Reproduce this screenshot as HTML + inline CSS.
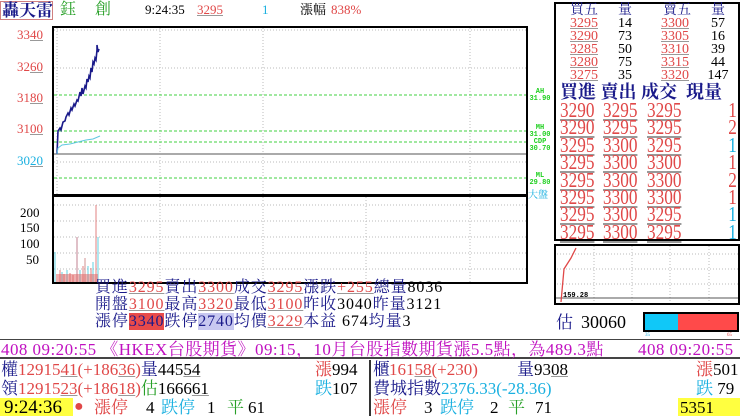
<!DOCTYPE html>
<html><head><meta charset="utf-8"><style>
*{margin:0;padding:0;box-sizing:border-box}
body{width:740px;height:416px;background:#fff;position:relative;overflow:hidden;font-family:"Liberation Serif","Noto Serif CJK SC","Noto Sans CJK TC",serif;color:#000}
.a{position:absolute;white-space:nowrap;line-height:1}
.r{color:#e04848}.b{color:#1a1a8a}.c{color:#1ab0e0}.g{color:#28a028}.m{color:#c010c0}
u{text-decoration:underline;text-decoration-color:#999}
.sg{font-family:"Liberation Mono",monospace;font-size:7px;color:#20d020;text-align:center;line-height:7px;font-weight:bold}
.ob{position:absolute;font-size:14px;line-height:13px;text-align:center;width:46px}
.big{position:absolute;font-size:21px;line-height:17.4px;letter-spacing:0;transform:scaleX(.82);transform-origin:0 0}
.bot{font-size:17px}
</style></head><body>
<!-- title -->
<div class="a b" style="left:0;top:1px;width:53px;height:19px;border:1px solid #d08080;font-size:17px;font-weight:bold;padding-left:1px">轟天雷</div>
<div class="a g" style="left:60px;top:2px;font-size:16px">鈺</div>
<div class="a g" style="left:95px;top:2px;font-size:16px">創</div>
<div class="a" style="left:145px;top:3px;font-size:13px">9:24:35</div>
<div class="a r" style="left:197px;top:3px;font-size:13px"><u>3295</u></div>
<div class="a c" style="left:262px;top:3px;font-size:13px">1</div>
<div class="a" style="left:300px;top:3px;font-size:13px">漲幅</div>
<div class="a r" style="left:331px;top:3px;font-size:13px">838%</div>
<!-- y labels -->
<div class="a r" style="left:17px;top:28px;font-size:13px">33<u>40</u></div>
<div class="a r" style="left:17px;top:60px;font-size:13px">32<u>60</u></div>
<div class="a r" style="left:17px;top:91px;font-size:13px">31<u>80</u></div>
<div class="a r" style="left:17px;top:122px;font-size:13px">31<u>00</u></div>
<div class="a c" style="left:17px;top:154px;font-size:13px">30<u>20</u></div>
<svg class="a" style="left:0;top:0" width="553" height="290">
<g fill="none">
<rect x="53" y="27" width="474" height="168" stroke="#000" stroke-width="2"/>
<g stroke="#bbb" stroke-dasharray="1,2">
<line x1="54" y1="30" x2="526" y2="30"/><line x1="54" y1="68" x2="526" y2="68"/><line x1="54" y1="162" x2="526" y2="162"/>
<line x1="160" y1="28" x2="160" y2="194"/><line x1="263" y1="28" x2="263" y2="194"/><line x1="470" y1="28" x2="470" y2="194"/>
<line x1="57" y1="28" x2="57" y2="194"/>
</g>
<line x1="54" y1="154" x2="526" y2="154" stroke="#aaa" stroke-width="2"/>
<g stroke="#40d040" stroke-dasharray="3,2">
<line x1="54" y1="95" x2="526" y2="95"/><line x1="54" y1="131" x2="526" y2="131"/><line x1="54" y1="142" x2="526" y2="142"/><line x1="54" y1="178" x2="526" y2="178"/>
</g>
<polyline stroke="#1a1a8a" stroke-width="1.6" points="57,154 58,131 60,128 61,130 63,122 65,121 66,117 68,113 69,115 71,108 72,110 74,104 75,106 77,100 78,101 80,92 81,96 82,88 83,94 85,86 86,88 87,79 88,82 89,76 90,78 91,68 92,72 93,62 94,64 95,58 96,60 97,50 97,45 98,52 99,49"/>
<polyline stroke="#60c8e0" stroke-width="1" points="57,154 58,148 62,145 70,144 78,142 86,140 93,139 100,136"/>
<rect x="53" y="196" width="474" height="87" stroke="#000" stroke-width="2"/>
<g stroke="#bbb" stroke-dasharray="1,2">
<line x1="54" y1="205" x2="526" y2="205"/><line x1="54" y1="221" x2="526" y2="221"/><line x1="54" y1="237" x2="526" y2="237"/><line x1="54" y1="253" x2="526" y2="253"/><line x1="54" y1="269" x2="526" y2="269"/>
<line x1="160" y1="197" x2="160" y2="282"/><line x1="263" y1="197" x2="263" y2="282"/><line x1="366" y1="197" x2="366" y2="282"/><line x1="470" y1="197" x2="470" y2="282"/>
</g>
<g stroke-width="1">
<line x1="55" y1="282" x2="55" y2="252" stroke="#60d0e0"/>
<line x1="60" y1="282" x2="60" y2="270" stroke="#e08080"/><line x1="62" y1="282" x2="62" y2="272" stroke="#60d0e0"/>
<line x1="64" y1="282" x2="64" y2="274" stroke="#e08080"/><line x1="67" y1="282" x2="67" y2="270" stroke="#60d0e0"/>
<line x1="70" y1="282" x2="70" y2="273" stroke="#e08080"/><line x1="73" y1="282" x2="73" y2="275" stroke="#e08080"/>
<line x1="77" y1="282" x2="77" y2="237" stroke="#c08090"/><line x1="80" y1="282" x2="80" y2="270" stroke="#60d0e0"/>
<line x1="83" y1="282" x2="83" y2="266" stroke="#e08080"/><line x1="85" y1="282" x2="85" y2="258" stroke="#d09090"/>
<line x1="88" y1="282" x2="88" y2="266" stroke="#60d0e0"/><line x1="91" y1="282" x2="91" y2="268" stroke="#e08080"/>
<line x1="93" y1="282" x2="93" y2="262" stroke="#60d0e0"/><line x1="96" y1="282" x2="96" y2="205" stroke="#e08080"/>
<line x1="98" y1="282" x2="98" y2="237" stroke="#60d0e0"/>
</g>
<rect x="56" y="274" width="42" height="8" fill="#e06060" opacity=".5"/>
</g>
</svg>
<div class="a sg" style="left:528px;top:89px;width:24px">AH<br>31.90</div>
<div class="a sg" style="left:528px;top:125px;width:24px">MH<br>31.00</div>
<div class="a sg" style="left:528px;top:139px;width:24px">CDP<br>30.70</div>
<div class="a sg" style="left:528px;top:173px;width:24px">ML<br>29.80</div>
<div class="a c" style="left:528px;top:191px;font-size:10px">大盤</div>
<div class="a" style="left:20px;top:206px;font-size:13px">200</div>
<div class="a" style="left:20px;top:221px;font-size:13px">150</div>
<div class="a" style="left:20px;top:237px;font-size:13px">100</div>
<div class="a" style="left:26px;top:253px;font-size:13px">50</div>
<!-- info rows -->
<div class="a b" style="left:95px;top:279px;font-size:16px;line-height:17px;letter-spacing:0.9px">買進<span class="r"><u>3295</u></span>賣出<span class="r"><u>3300</u></span>成交<span class="r"><u>3295</u></span>漲跌<span class="r"><u>+255</u></span>總量<span style="color:#000">8036</span><br>開盤<span class="r"><u>3100</u></span>最高<span class="r"><u>3320</u></span>最低<span class="r"><u>3100</u></span>昨收<span style="color:#000">3040</span>昨量<span style="color:#000">3121</span><br>漲停<span style="background:#e84a4a;color:#1a1a8a">3340</span>跌停<span style="background:#c8c8f0">2740</span>均價<span class="r"><u>3229</u></span>本益 <span style="color:#000">674</span>均量<span style="color:#000">3</span></div>
<!-- order book -->
<div class="a" style="left:554px;top:2px;width:186px;height:239px;border:2px solid #000"></div>
<div class="ob b" style="left:561px;top:4px">買五</div><div class="ob b" style="left:602px;top:4px">量</div><div class="ob b" style="left:654px;top:4px">賣五</div><div class="ob b" style="left:695px;top:4px">量</div>
<div class="ob r" style="left:561px;top:17px;line-height:13px"><u>3295</u><br><u>3290</u><br><u>3285</u><br><u>3280</u><br><u>3275</u></div>
<div class="ob" style="left:602px;top:17px">14<br>73<br>50<br>75<br>35</div>
<div class="ob r" style="left:652px;top:17px"><u>3300</u><br><u>3305</u><br><u>3310</u><br><u>3315</u><br><u>3320</u></div>
<div class="ob" style="left:695px;top:17px">57<br>16<br>39<br>44<br>147</div>
<div class="a b" style="left:560px;top:83px;font-size:18px;font-weight:bold;letter-spacing:0">買進 賣出 成交 &nbsp;現量</div>
<div class="big r" style="left:560px;top:102px"><u>3290</u><br><u>3290</u><br><u>3295</u><br><u>3295</u><br><u>3295</u><br><u>3295</u><br><u>3295</u><br><u>3295</u></div>
<div class="big r" style="left:603px;top:102px"><u>3295</u><br><u>3295</u><br><u>3300</u><br><u>3300</u><br><u>3300</u><br><u>3300</u><br><u>3300</u><br><u>3300</u></div>
<div class="big r" style="left:647px;top:102px"><u>3295</u><br><u>3295</u><br><u>3295</u><br><u>3300</u><br><u>3300</u><br><u>3300</u><br><u>3295</u><br><u>3295</u></div>
<div class="big" style="left:727px;top:102px;text-align:right;width:12px"><span class="r">1</span><br><span class="r">2</span><br><span class="c">1</span><br><span class="r">1</span><br><span class="r">2</span><br><span class="r">1</span><br><span class="c">1</span><br><span class="c">1</span></div>
<!-- mini chart -->
<svg class="a" style="left:554px;top:244px" width="186" height="62">
<rect x="1" y="1" width="184" height="59" fill="none" stroke="#000" stroke-width="2"/>
<g stroke="#bbb" stroke-dasharray="1,2"><line x1="3" y1="10" x2="184" y2="10"/><line x1="3" y1="25" x2="184" y2="25"/><line x1="3" y1="40" x2="184" y2="40"/><line x1="40" y1="2" x2="40" y2="59"/><line x1="78" y1="2" x2="78" y2="59"/><line x1="116" y1="2" x2="116" y2="59"/><line x1="155" y1="2" x2="155" y2="59"/></g>
<line x1="2" y1="54" x2="184" y2="54" stroke="#555"/>
<polyline fill="none" stroke="#e04848" stroke-width="1.3" points="7,58 10,25 17,14 22,4"/>
<text x="9" y="53" font-family="Liberation Mono" font-size="7" font-weight="bold">159.28</text>
</svg>
<div class="a b" style="left:556px;top:314px;font-size:17px">估</div>
<div class="a" style="left:581px;top:313px;font-size:18px">30060</div>
<div class="a" style="left:643px;top:312px;width:96px;height:20px;border:2px solid #000;background:#ff4a4a"><div style="width:33px;height:16px;background:#10c8f8"></div></div>
<div class="a c" style="left:645px;top:333px;font-size:5px">35</div><div class="a r" style="left:727px;top:333px;font-size:5px">65</div>
<!-- ticker -->
<div class="a" style="left:0;top:339px;width:740px;height:20px;border-top:1px solid #444;border-bottom:2px solid #444"></div>
<div class="a m" style="left:1px;top:341px;font-size:17px;letter-spacing:0.45px">408 09:20:55 《HKEX台股期貨》09:15，10月台股指數期貨漲5.5點，為489.3點</div>
<div class="a m" style="left:638px;top:341px;font-size:17px;letter-spacing:0.45px">408 09:20:55</div>
<!-- bottom -->
<div class="a" style="left:369px;top:360px;width:2px;height:56px;background:#333"></div>
<div class="a b bot" style="left:1px;top:361px">權<span class="r">12915<u>41</u>(+186<u>36</u>)</span>量<span style="color:#000">445<u>54</u></span></div>
<div class="a bot" style="left:315px;top:361px"><span class="r">漲</span>994</div>
<div class="a b bot" style="left:1px;top:380px">領<span class="r">12915<u>23</u>(+186<u>18</u>)</span><span class="g">估</span><span style="color:#000">1666<u>61</u></span></div>
<div class="a bot" style="left:315px;top:380px"><span class="c">跌</span>107</div>
<div class="a" style="left:0;top:398px;width:73px;height:18px;background:#ffff40"></div>
<div class="a" style="left:4px;top:398px;font-size:19px">9:24:36</div>
<div class="a" style="left:74px;top:399px;font-size:16px;color:#e04848">●</div>
<div class="a bot r" style="left:94px;top:399px">漲停</div>
<div class="a bot" style="left:146px;top:399px">4</div>
<div class="a bot c" style="left:161px;top:399px">跌停</div>
<div class="a bot" style="left:207px;top:399px">1</div>
<div class="a bot g" style="left:227px;top:399px">平</div>
<div class="a bot" style="left:248px;top:399px">61</div>
<div class="a b bot" style="left:373px;top:361px">櫃</div>
<div class="a bot r" style="left:389px;top:361px">161<u>58</u>(+230)</div>
<div class="a b bot" style="left:517px;top:361px">量<span style="color:#000">93<u>08</u></span></div>
<div class="a bot" style="left:696px;top:361px"><span class="r">漲</span>501</div>
<div class="a b bot" style="left:373px;top:380px">費城指數<span class="c">2376.33(-28.36)</span></div>
<div class="a bot" style="left:696px;top:380px"><span class="c">跌</span> 79</div>
<div class="a bot r" style="left:373px;top:399px">漲停</div>
<div class="a bot" style="left:424px;top:399px">3</div>
<div class="a bot c" style="left:440px;top:399px">跌停</div>
<div class="a bot" style="left:490px;top:399px">2</div>
<div class="a bot g" style="left:508px;top:399px">平</div>
<div class="a bot" style="left:535px;top:399px">71</div>
<div class="a" style="left:678px;top:398px;width:62px;height:18px;background:#ffff40"></div>
<div class="a bot" style="left:680px;top:399px">5351</div>
</body></html>
